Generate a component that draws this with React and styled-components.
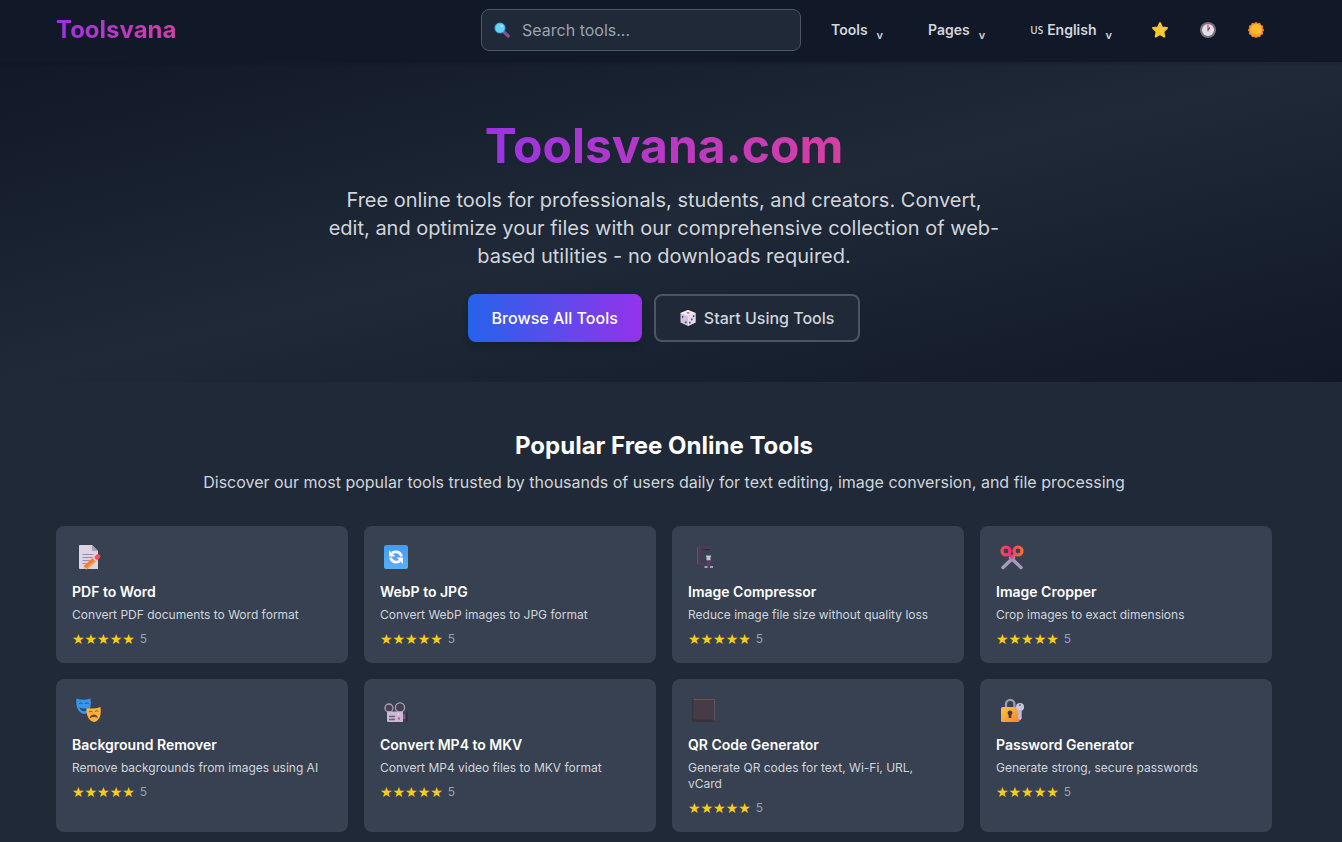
import React from 'react'
import styled, { createGlobalStyle } from 'styled-components'

const GlobalStyle = createGlobalStyle`
  *, *::before, *::after {
    box-sizing: border-box;
  }
  body {
    margin: 0;
    background: #1f2937;
    color: #fff;
    font-family: Inter, "Liberation Sans", sans-serif;
  }
  h1, h2, h3, p {
    margin: 0;
  }
  a {
    color: inherit;
    text-decoration: none;
  }
  button, input {
    font-family: inherit;
  }
  svg {
    display: block;
    flex-shrink: 0;
  }
`

const Page = styled.div`
  --gutter: 14px;
`

const Container = styled.div`
  max-width: 1280px;
  margin: 0 auto;
  padding: 0 32px;
`

const Header = styled.header`
  position: relative;
  padding: 9px var(--gutter) 11px 0;
  background: #111827;
  box-shadow: 0 1px 3px rgba(0, 0, 0, 0.15);
`

const HeaderRow = styled(Container)`
  display: flex;
  align-items: center;
  justify-content: space-between;
`

const Logo = styled.a`
  font-size: 24px;
  line-height: 32px;
  font-weight: 700;
  background: linear-gradient(to right, #9a33e4, #d63fa3);
  background-clip: text;
  -webkit-background-clip: text;
  color: transparent;
`

const HeaderRight = styled.div`
  display: flex;
  align-items: center;
  gap: 16px;
`

const SearchBox = styled.label`
  display: flex;
  align-items: center;
  gap: 12px;
  width: 320px;
  height: 42px;
  padding: 0 12px;
  border: 1px solid #4b5563;
  border-radius: 8px;
  background: #1f2937;
`

const SearchInput = styled.input`
  flex: 1;
  min-width: 0;
  padding: 0;
  border: 0;
  outline: 0;
  background: transparent;
  color: #fff;
  font-size: 16px;
  line-height: 24px;
  &::placeholder {
    color: #9ca3af;
    opacity: 1;
  }
`

const Nav = styled.nav`
  display: flex;
  align-items: center;
  gap: 17px;
  padding-right: 2px;
`

const NavButton = styled.button`
  display: flex;
  align-items: center;
  padding: 8px 14px;
  border: 0;
  background: transparent;
  color: #d1d5db;
  font-size: 14px;
  line-height: 20px;
  font-weight: 600;
  cursor: pointer;
`

const Chevron = styled.span`
  margin-left: 9px;
  padding-top: 10px;
  font-size: 11px;
  line-height: 12px;
`

const Region = styled.span`
  margin-right: 4px;
  font-family: "Open Sans", sans-serif;
  font-size: 10px;
  font-weight: 600;
`

const IconButtons = styled.div`
  display: flex;
  gap: 16px;
`

const IconButton = styled.button`
  padding: 8px;
  border: 0;
  background: transparent;
  cursor: pointer;
`

const Hero = styled.section`
  padding: 60px var(--gutter) 40px 0;
  background: linear-gradient(to bottom right, #111827, #1f2937, #111827);
  text-align: center;
`

const HeroTitle = styled.h1`
  width: fit-content;
  margin: 0 auto 16px;
  font-size: 48px;
  line-height: 48px;
  font-weight: 700;
  background: linear-gradient(to right, #9a33e4, #d63fa3);
  background-clip: text;
  -webkit-background-clip: text;
  color: transparent;
`

const HeroText = styled.p`
  max-width: 672px;
  margin: 0 auto 24px;
  color: #d1d5db;
  font-size: 20px;
  line-height: 28px;
`

const HeroActions = styled.div`
  display: flex;
  justify-content: center;
  gap: 12px;
`

const ActionButton = styled.button`
  display: flex;
  align-items: center;
  gap: 8px;
  height: 48px;
  padding: 0 24px;
  border: ${({ $primary }) => ($primary ? '0' : '2px solid #4b5563')};
  border-radius: 8px;
  background: ${({ $primary }) =>
    $primary ? 'linear-gradient(to right, #2563eb, #9333ea)' : '#1f2937'};
  box-shadow: ${({ $primary }) =>
    $primary ? '0 4px 6px rgba(0, 0, 0, 0.15)' : 'none'};
  color: ${({ $primary }) => ($primary ? '#fff' : '#d1d5db')};
  font-size: 16px;
  line-height: 24px;
  font-weight: 500;
  cursor: pointer;
`

const Popular = styled.section`
  padding: 48px var(--gutter) 48px 0;
`

const SectionHead = styled.div`
  margin-bottom: 32px;
  text-align: center;
  h2 {
    margin-bottom: 8px;
    font-size: 24px;
    line-height: 32px;
    font-weight: 700;
  }
  p {
    color: #d1d5db;
    font-size: 16px;
    line-height: 24px;
  }
`

const Grid = styled.div`
  display: grid;
  grid-template-columns: repeat(4, 1fr);
  gap: 16px;
`

const Card = styled.a`
  display: block;
  padding: 16px;
  border-radius: 8px;
  background: #374151;
  svg {
    margin-bottom: 8px;
  }
  h3 {
    margin-bottom: 5px;
    font-size: 14px;
    line-height: 20px;
    font-weight: 600;
  }
  p {
    margin-bottom: 8px;
    color: #d1d5db;
    font-size: 12px;
    line-height: 16px;
  }
`

const Rating = styled.div`
  display: flex;
  align-items: center;
  gap: 5px;
  height: 16px;
  color: #9ca3af;
  font-size: 12px;
  line-height: 16px;
`

const Stars = styled.span`
  color: #facc15;
  font-family: "DejaVu Sans", sans-serif;
  font-size: 14px;
`

const SearchIcon = () => (
  <svg width="16" height="16" viewBox="0 0 16 16">
    <path d="M10 10l4.3 4.1" stroke="#8b4f93" strokeWidth="3.2" strokeLinecap="round" />
    <circle cx="6" cy="6" r="5.6" fill="#3f91cf" />
    <circle cx="6" cy="6" r="4.7" fill="#66d3f2" />
    <circle cx="7.8" cy="4" r="1" fill="#b5f1ff" />
  </svg>
)

const StarIcon = () => (
  <svg width="16" height="16" viewBox="0 0 16 16">
    <path
      d="M8 1l2.1 4.3 4.9.7-3.5 3.6.9 5L8 12.3l-4.4 2.3.9-5L1 6l4.900-.7z"
      fill="#f8c62c"
      stroke="#f8c62c"
      strokeWidth="1.8"
      strokeLinejoin="round"
    />
    <path d="M8 3l1.2 3.6L13 7l-3 2.4.8 3.2L8 10.8z" fill="#f3d13f" />
  </svg>
)

const ClockIcon = () => (
  <svg width="16" height="16" viewBox="0 0 16 16">
    <circle cx="8" cy="8" r="8" fill="#77727a" />
    <circle cx="8" cy="8" r="6" fill="#e4dee9" />
    <path d="M8 8.5V2.5" stroke="#e5395f" strokeWidth="1.2" />
    <path d="M8 8.5l1.7-3" stroke="#4b4358" strokeWidth="1.3" />
    <circle cx="8" cy="8.5" r="1" fill="#9a92a5" />
  </svg>
)

const SunIcon = () => (
  <svg width="16" height="16" viewBox="0 0 16 16">
    {[0, 30, 60, 90, 120, 150, 180, 210, 240, 270, 300, 330].map(a => (
      <circle key={a} cx="8" cy="1.7" r="1.7" fill="#fb7c2c" transform={`rotate(${a} 8 8)`} />
    ))}
    <circle cx="8" cy="8" r="6.6" fill="#fba529" />
    <circle cx="8.5" cy="7.2" r="5" fill="#fdb92f" />
  </svg>
)

const DiceIcon = () => (
  <svg width="16" height="16" viewBox="0 0 16 16">
    <path d="M8 0l7.5 3v9.5L8 16 .5 12.5V3z" fill="#cfc4d8" />
    <path d="M8 0l7.5 3L8 6 .5 3z" fill="#f2edf5" />
    <path d="M8 6l7.5-3v9.5L8 16z" fill="#e4dcec" />
    <ellipse cx="8" cy="2.8" rx="1.5" ry=".9" fill="#f0566f" />
    <g fill="#55378a">
      <ellipse cx="2.6" cy="6.8" rx=".8" ry="1.1" />
      <ellipse cx="5.9" cy="12.3" rx=".8" ry="1.1" />
      <ellipse cx="13.7" cy="6.2" rx=".8" ry="1.1" />
      <ellipse cx="11.8" cy="9.4" rx=".8" ry="1.1" />
      <ellipse cx="9.9" cy="12.7" rx=".8" ry="1.1" />
    </g>
  </svg>
)

const ToolIcon = ({ children }) => (
  <svg width="32" height="32" viewBox="0 0 32 32">
    {children}
  </svg>
)

const DocIcon = () => (
  <ToolIcon>
    <path d="M7 4a1 1 0 0 1 1-1h12l6 6v18H8a1 1 0 0 1-1-1z" fill="#ddd3e2" />
    <path d="M20 3l6 6h-5a1 1 0 0 1-1-1z" fill="#ad9cb7" />
    <path d="M10.5 12.5h11M10.5 15.5h10M10.5 18.5h7M10.5 21.5h4" stroke="#9a8ca8" />
    <path d="M13 26l11-10" stroke="#fb7a32" strokeWidth="4.6" />
    <path d="M14.2 27l9.5-8.7" stroke="#fda14a" strokeWidth="1.5" />
    <path d="M22 17.8l2.7-2.5" stroke="#d9cfe4" strokeWidth="4.8" />
    <path d="M25 15.3l1-.8" stroke="#fa5054" strokeWidth="4.8" strokeLinecap="round" />
    <path d="M11 27l.8-3 3 3z" fill="#f0c29a" />
  </ToolIcon>
)

const SyncIcon = () => (
  <ToolIcon>
    <defs>
      <linearGradient id="sync" x1="0" y1="0" x2="0" y2="1">
        <stop offset="0" stopColor="#3f9cf6" />
        <stop offset="1" stopColor="#5aaef5" />
      </linearGradient>
    </defs>
    <rect x="4" y="3" width="24" height="24" rx="2.5" fill="url(#sync)" />
    <path
      d="M12 11C15.500 9 20.500 9.500 21.500 14.500M20 19C16.500 21 11.500 20.500 10.500 15.500"
      fill="none"
      stroke="#fff4ff"
      strokeWidth="2.8"
    />
    <path d="M9 8v6.500h6.500zM23 22v-6.500h-6.500z" fill="#fff4ff" />
  </ToolIcon>
)

const ClampIcon = () => (
  <ToolIcon>
    <path d="M9 5.500A1.500 1.500 0 0 1 10.500 4H20l2.500 1.500V8h-7L13.500 10v8l2.500 4h2.500v1H10a1 1 0 0 1-1-1z" fill="#503a5c" />
    <path d="M13.500 11l3-2.500h6V13h-5v5l-1 4-3-4z" fill="#374151" />
    <path d="M9.500 5v17" stroke="#6a4c75" />
    <path d="M15 7.500h7" stroke="#30283b" />
    <path d="M18 13.500h5V15h-.5v3.500h-4V15H18z" fill="#c5bfcd" />
    <path d="M18.500 18.500h4V24h-4z" fill="#5a3d66" />
    <path d="M16.500 24H25v2h-8.500z" fill="#ad9eb9" />
    <path d="M19.500 25h2.500" stroke="#513a60" strokeWidth="2" />
  </ToolIcon>
)

const ScissorsIcon = () => (
  <ToolIcon>
    <defs>
      <linearGradient id="scissors" gradientUnits="userSpaceOnUse" x1="4" y1="0" x2="28" y2="0">
        <stop offset="0" stopColor="#ff4c55" />
        <stop offset=".45" stopColor="#f72b77" />
        <stop offset=".6" stopColor="#fb4f50" />
        <stop offset="1" stopColor="#ff6f2b" />
      </linearGradient>
    </defs>
    <path d="M7 25.500l10.500-10M25 25.500l-10.500-10" stroke="#a99abd" strokeWidth="3.4" strokeLinecap="round" />
    <path d="M12.500 11.500l3 3.500M19.500 11.500l-3 3.500" stroke="url(#scissors)" strokeWidth="3" />
    <g fill="none" stroke="url(#scissors)" strokeWidth="3.2">
      <circle cx="10" cy="9" r="4" />
      <circle cx="22" cy="9" r="4" />
    </g>
    <circle cx="16" cy="16" r="1.5" fill="#8e6f99" />
  </ToolIcon>
)

const MasksIcon = () => (
  <ToolIcon>
    <defs>
      <linearGradient id="mask" x1="0" y1="0" x2="1" y2="1">
        <stop offset="0" stopColor="#269bf2" />
        <stop offset="1" stopColor="#528ce9" />
      </linearGradient>
    </defs>
    <path d="M4.500 3.500q7 2.400 14 0c1.300 8-1 15-6.500 15.500C6.500 18 3.300 11.500 4.500 3.500z" fill="url(#mask)" />
    <path d="M7 8.500q2-1.300 3.500 0M13 8.500q1.800-1.300 3.500 0" stroke="#235391" fill="none" />
    <path d="M7.500 12.500q4.500 2 9 0c-1 5-7.500 5-9 0z" fill="#234c86" />
    <path d="M14.500 13q7 1.600 14-1c1.200 8-1.200 14-6.300 15-4.800-.5-8.300-6-7.700-14z" fill="#feb23b" />
    <path d="M17 17q2-1.800 3.500 0M23 16.500q2-1.500 3.300 0" stroke="#925d24" fill="none" />
    <path d="M17.500 23.500c.5-5 7.500-5.500 8.500-.5q-4.300-2-8.500.5z" fill="#6f4432" />
  </ToolIcon>
)

const ProjectorIcon = () => (
  <ToolIcon>
    <g fill="#493d54" stroke="#a9a3ae" strokeWidth="1.3">
      <circle cx="9" cy="13" r="4" />
      <circle cx="20" cy="12.5" r="4.6" />
    </g>
    <path d="M7 16.500h15a1 1 0 0 1 1 1V27H8a1 1 0 0 1-1-1z" fill="#c9b9d6" />
    <path d="M23 20l5-3v10l-5-3z" fill="#3d2b47" />
    <path d="M23 19.500l2.500-1v6L23 24z" fill="#77538e" />
    <path d="M9 21.500h6M9 24.500h6" stroke="#705b80" strokeWidth="1.3" />
    <path d="M18 22.500h2v2h-2z" fill="#df477b" />
    <path d="M18.500 18v2" stroke="#f6ecff" />
  </ToolIcon>
)

const SquareIcon = () => (
  <ToolIcon>
    <rect x="4" y="3" width="24" height="24" rx="1.5" fill="#38333a" />
    <path d="M5.500 4.500h21v21" fill="none" stroke="#5f5760" strokeWidth="1.6" />
    <path d="M5.500 5.500h20v19h-20z" fill="#453c47" />
  </ToolIcon>
)

const LockIcon = () => (
  <ToolIcon>
    <defs>
      <linearGradient id="lock" x1="0" y1="0" x2="1" y2="1">
        <stop offset="0" stopColor="#ffc63d" />
        <stop offset="1" stopColor="#f78332" />
      </linearGradient>
    </defs>
    <path d="M10 13V9a4.200 4.200 0 0 1 8.400 0v4" fill="none" stroke="#a39bad" strokeWidth="2.3" />
    <rect x="5" y="12" width="18.5" height="15" rx="1.5" fill="url(#lock)" />
    <path d="M14 15.500a2.500 2.500 0 0 1 1.300 4.600V23h-2.600v-2.900A2.500 2.500 0 0 1 14 15.500z" fill="#503345" />
    <circle cx="24" cy="12" r="4" fill="#cfc4dd" />
    <path d="M22.200 15h3.500v8.500l-1.700 2-1.800-2z" fill="#c6b9d6" />
    <circle cx="24" cy="10" r="1" fill="#6d5e7c" />
  </ToolIcon>
)

const tools = [
  { title: 'PDF to Word', description: 'Convert PDF documents to Word format', Icon: DocIcon },
  { title: 'WebP to JPG', description: 'Convert WebP images to JPG format', Icon: SyncIcon },
  { title: 'Image Compressor', description: 'Reduce image file size without quality loss', Icon: ClampIcon },
  { title: 'Image Cropper', description: 'Crop images to exact dimensions', Icon: ScissorsIcon },
  { title: 'Background Remover', description: 'Remove backgrounds from images using AI', Icon: MasksIcon },
  { title: 'Convert MP4 to MKV', description: 'Convert MP4 video files to MKV format', Icon: ProjectorIcon },
  { title: 'QR Code Generator', description: 'Generate QR codes for text, Wi-Fi, URL, vCard', Icon: SquareIcon },
  { title: 'Password Generator', description: 'Generate strong, secure passwords', Icon: LockIcon },
]

const ToolCard = ({ title, description, Icon }) => (
  <Card href="#">
    <Icon />
    <h3>{title}</h3>
    <p>{description}</p>
    <Rating>
      <Stars>★★★★★</Stars>
      <span>5</span>
    </Rating>
  </Card>
)

const App = () => (
  <Page>
    <GlobalStyle />
    <Header>
      <HeaderRow>
        <Logo href="#">Toolsvana</Logo>
        <HeaderRight>
          <SearchBox>
            <SearchIcon />
            <SearchInput type="text" aria-label="Search tools" placeholder="Search tools..." />
          </SearchBox>
          <Nav>
            <NavButton>
              Tools <Chevron>v</Chevron>
            </NavButton>
            <NavButton>
              Pages <Chevron>v</Chevron>
            </NavButton>
            <NavButton>
              <Region>US</Region>English <Chevron>v</Chevron>
            </NavButton>
          </Nav>
          <IconButtons>
            <IconButton aria-label="Favorites"><StarIcon /></IconButton>
            <IconButton aria-label="History"><ClockIcon /></IconButton>
            <IconButton aria-label="Theme"><SunIcon /></IconButton>
          </IconButtons>
        </HeaderRight>
      </HeaderRow>
    </Header>
    <main>
      <Hero>
        <Container>
          <HeroTitle>Toolsvana.com</HeroTitle>
          <HeroText>
            Free online tools for professionals, students, and creators. Convert, edit, and
            optimize your files with our comprehensive collection of web-based utilities - no
            downloads required.
          </HeroText>
          <HeroActions>
            <ActionButton $primary>Browse All Tools</ActionButton>
            <ActionButton>
              <DiceIcon />
              Start Using Tools
            </ActionButton>
          </HeroActions>
        </Container>
      </Hero>
      <Popular>
        <Container>
          <SectionHead>
            <h2>Popular Free Online Tools</h2>
            <p>
              Discover our most popular tools trusted by thousands of users daily for text
              editing, image conversion, and file processing
            </p>
          </SectionHead>
          <Grid>
            {tools.map(tool => (
              <ToolCard key={tool.title} {...tool} />
            ))}
          </Grid>
        </Container>
      </Popular>
    </main>
  </Page>
)

export default App
